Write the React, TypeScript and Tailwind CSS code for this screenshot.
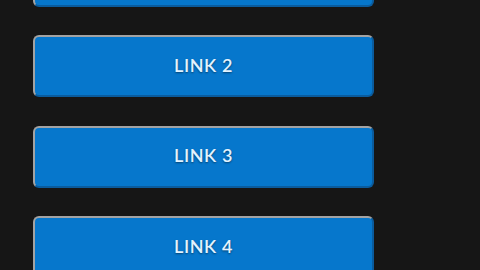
const links = ["Link 1", "Link 2", "Link 3", "Link 4", "Link 5"];

export default function App() {
  return (
    <div className="h-[270px] w-[480px] overflow-hidden bg-[#161616]">
      <div className="-mt-[55.5px] flex flex-col gap-[28.5px] pl-[33px]">
        {links.map((label) => (
          <a
            key={label}
            href="#"
            className="flex h-[62px] w-[341px] items-center justify-center rounded-[6px] border-2 border-t-[#a3a3a3] border-l-[#a3a3a3] border-r-[#0a5c9e] border-b-[#0a5c9e] bg-[#0677cc] pb-[2px] font-['Lato',sans-serif] text-[18px] font-semibold uppercase tracking-[0.6px] text-[#e2f3ff] [text-shadow:0_1px_2px_rgba(0,0,0,0.45)]"
          >
            {label}
          </a>
        ))}
      </div>
    </div>
  );
}
